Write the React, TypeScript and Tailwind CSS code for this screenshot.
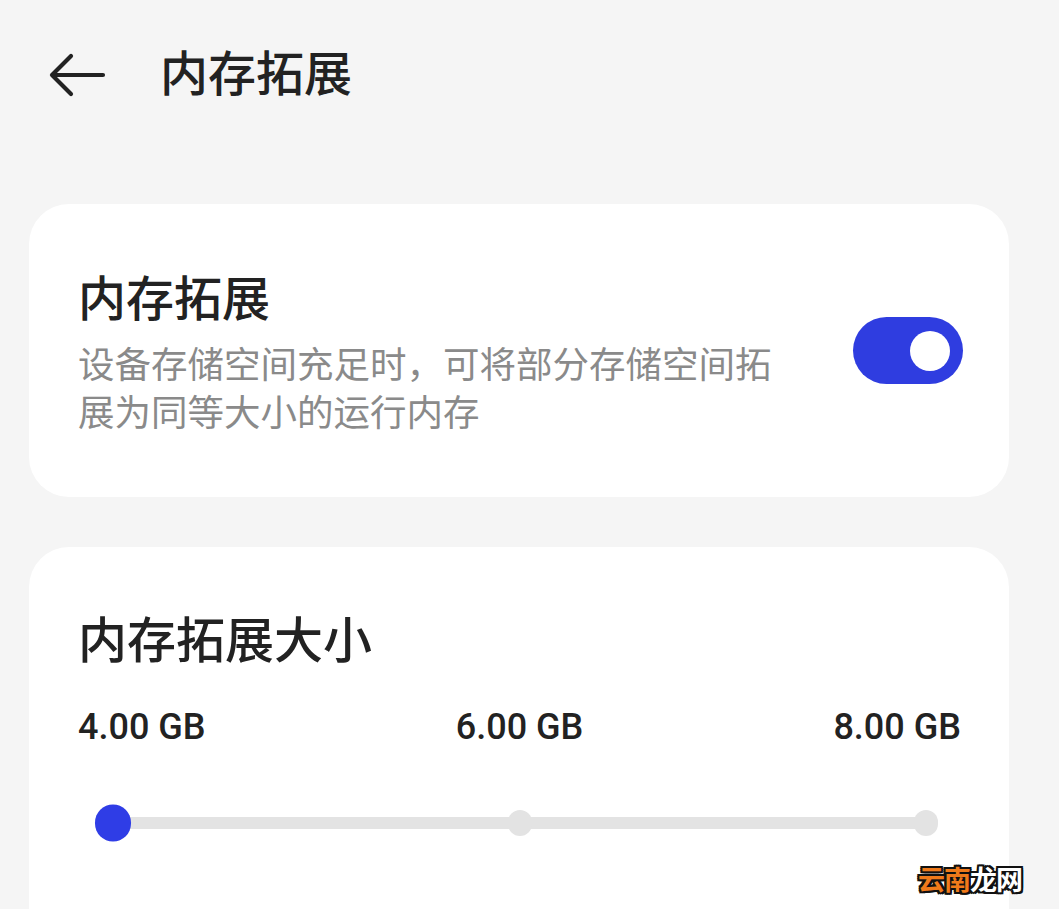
import React from 'react';

const font = "font-['Roboto','Noto_Sans_CJK_SC',sans-serif]";

function Toggle() {
  return (
    <div className="mt-[45px] w-[110px] h-[67px] rounded-full bg-[#2f3de0] flex items-center justify-end pr-[13px] shrink-0 self-start">
      <div className="w-[40px] h-[40px] rounded-full bg-white" />
    </div>
  );
}

function SizeSlider() {
  const stops = ['left-0', 'left-1/2', 'left-full'];
  return (
    <div className="relative mx-[35px] h-[40px]">
      <div className="absolute left-0 right-0 top-1/2 -translate-y-1/2 h-[12px] rounded-full bg-[#e3e3e3]" />
      {stops.map((s, i) => (
        <div
          key={s}
          className={`absolute top-1/2 -translate-x-1/2 -translate-y-1/2 rounded-full ${s} ${
            i === 0 ? 'w-[36px] h-[37px] bg-[#2f3de6]' : 'w-[24px] h-[26px] bg-[#e3e3e3]'
          }`}
        />
      ))}
    </div>
  );
}

export default function App() {
  return (
    <div className={`relative w-[1059px] h-[909px] bg-[#f5f5f5] overflow-hidden ${font}`}>
      {/* Header */}
      <header className="h-[150px] flex items-center pl-[46px]">
        <svg width="60" height="50" viewBox="0 0 60 50" fill="none" className="shrink-0">
          <path d="M57 25 H6 M25 6 L6 25 L25 44" stroke="#222" strokeWidth="4.2" strokeLinecap="round" strokeLinejoin="round" />
        </svg>
        <h1 className="ml-[54px] text-[48px] leading-[56px] font-medium text-[#222]">内存拓展</h1>
      </header>

      {/* Memory extension toggle */}
      <section className="mt-[54px] mx-[29px] w-[980px] bg-white rounded-[40px] pl-[49px] pr-[46px] pt-[68px] pb-[59px] flex justify-between">
        <div>
          <div className="text-[48px] leading-[56px] font-medium text-[#222]">内存拓展</div>
          <p className="mt-[14px] text-[36.5px] leading-[48px] text-[#8a8a8a] w-[705px]">
            设备存储空间充足时，可将部分存储空间拓展为同等大小的运行内存
          </p>
        </div>
        <Toggle />
      </section>

      {/* Size */}
      <section className="mt-[50px] mx-[29px] w-[980px] h-[420px] bg-white rounded-[40px] pl-[49px] pr-[48px] pt-[67px]">
        <div className="text-[49px] leading-[56px] font-medium text-[#222]">内存拓展大小</div>
        <div className="mt-[35px] flex justify-between text-[36px] leading-[44px] font-medium text-[#222]">
          <span>4.00 GB</span>
          <span>6.00 GB</span>
          <span>8.00 GB</span>
        </div>
        <div className="mt-[54px]">
          <SizeSlider />
        </div>
      </section>

      {/* Watermark */}
      <div className="absolute right-[37px] bottom-[12px] text-[27px] leading-[32px] font-bold tracking-[-1px] [text-shadow:-2px_-2px_0_#111,2px_-2px_0_#111,-2px_2px_0_#111,2px_2px_0_#111,0_2px_0_#111,0_-2px_0_#111,2px_0_0_#111,-2px_0_0_#111]">
        <span className="text-[#f07a1a]">云南</span>
        <span className="text-white">龙网</span>
      </div>
    </div>
  );
}
